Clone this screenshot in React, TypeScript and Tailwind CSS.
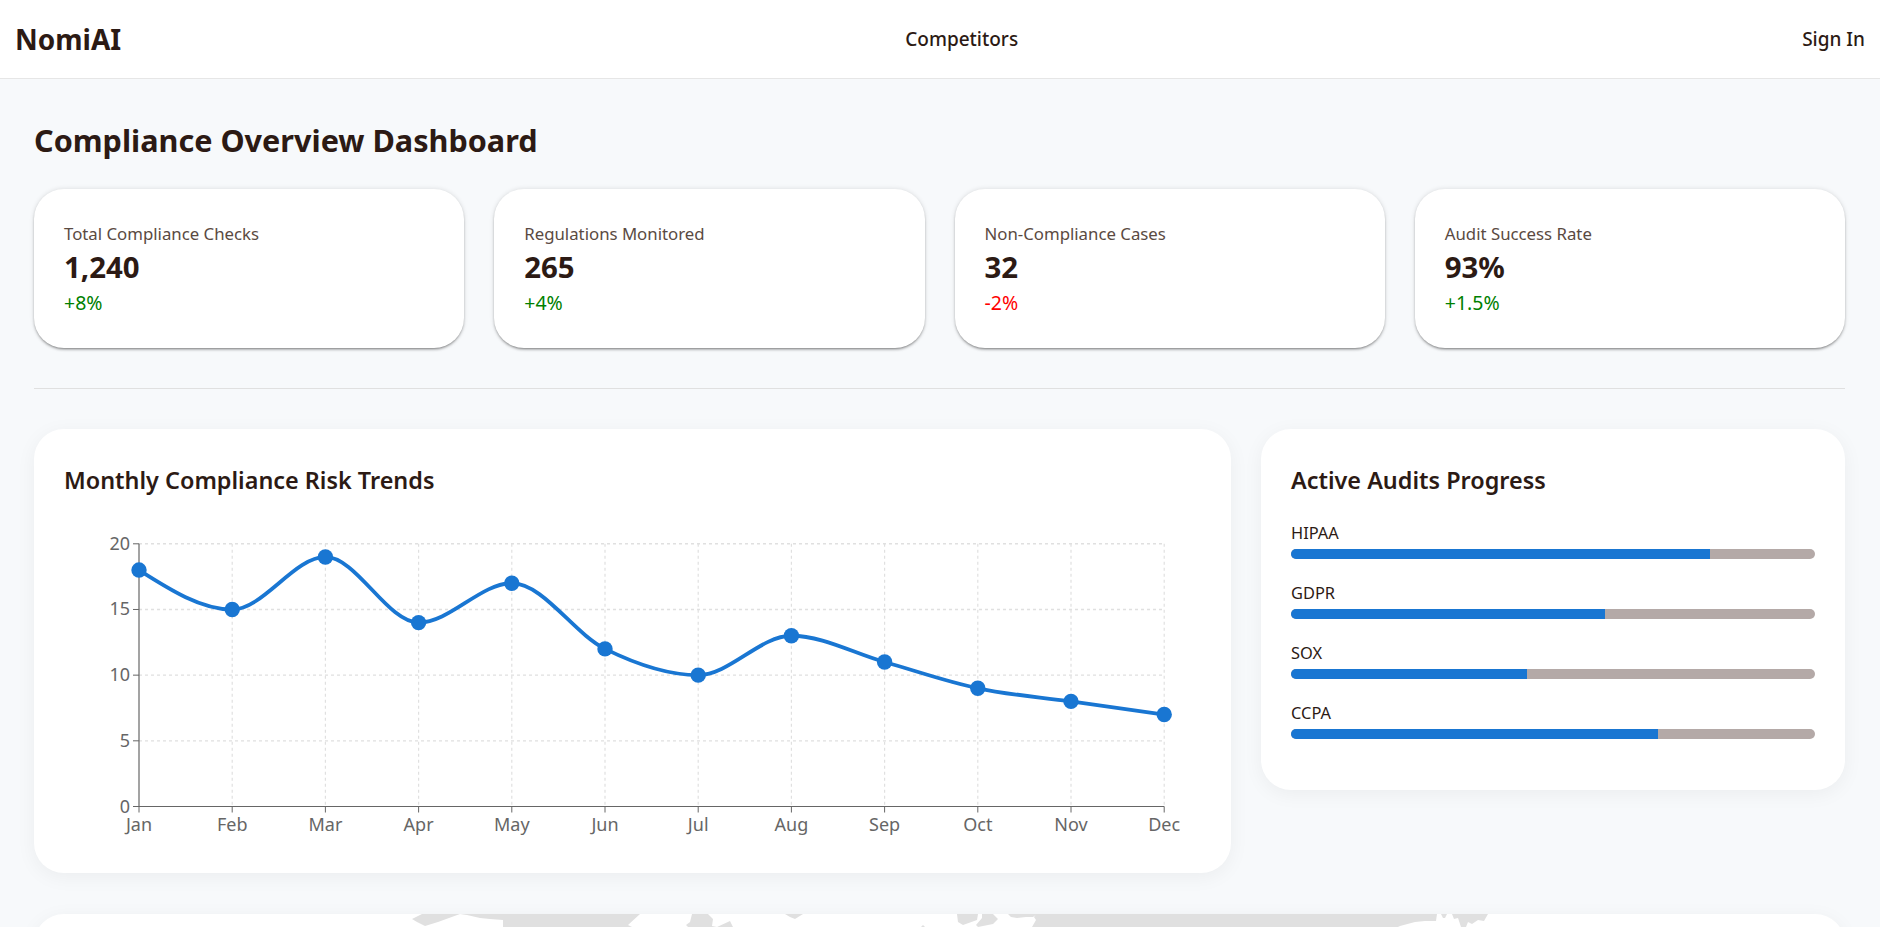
const font = { fontFamily: '"Noto Sans", sans-serif' };
const months = ["Jan","Feb","Mar","Apr","May","Jun","Jul","Aug","Sep","Oct","Nov","Dec"];
const vals = [18,15,19,14,17,12,10,13,11,9,8,7];
const X0 = 74, DX = 93.2, Y0 = 303.5, YH = 262.7;
const px = (i:number) => X0 + i*DX;
const py = (v:number) => Y0 - (v/20)*YH;
function monotone(){
  const n=vals.length, xs=vals.map((_,i)=>px(i)), ys=vals.map(py);
  const sl:number[]=[]; for(let i=0;i<n-1;i++) sl.push((ys[i+1]-ys[i])/(xs[i+1]-xs[i]));
  const t:number[]=new Array(n).fill(0);
  for(let i=1;i<n-1;i++){
    const s0=sl[i-1],s1=sl[i];
    const p=(s0+s1)/2;
    t[i]=(Math.sign(s0)+Math.sign(s1))*Math.min(Math.abs(s0),Math.abs(s1),0.5*Math.abs(p))||0;
  }
  t[0]=(3*sl[0]-t[1])/2; t[n-1]=(3*sl[n-2]-t[n-2])/2;
  let d=`M${xs[0]},${ys[0]}`;
  for(let i=0;i<n-1;i++){const h=DX/3; d+=`C${xs[i]+h},${ys[i]+h*t[i]} ${xs[i+1]-h},${ys[i+1]-h*t[i+1]} ${xs[i+1]},${ys[i+1]}`;}
  return d;
}
function Chart(){
  return (
    <svg width="1140" height="345" className="block mt-[7px]">
      {[5,10,15,20].map(v=><line key={v} x1={X0} x2={X0+11*DX} y1={py(v)} y2={py(v)} stroke="#e0e0e0" strokeWidth="1.4" strokeDasharray="3 3"/>)}
      {months.map((m,i)=>i>0&&<line key={m} x1={px(i)} x2={px(i)} y1={py(20)} y2={Y0} stroke="#e0e0e0" strokeWidth="1.2" strokeDasharray="3 3"/>)}
      <line x1={X0} x2={X0} y1={py(20)} y2={Y0} stroke="#666" strokeWidth="1.2"/>
      <line x1={X0} x2={X0+11*DX} y1={Y0} y2={Y0} stroke="#666" strokeWidth="1.2"/>
      {[0,5,10,15,20].map(v=><g key={v}>
        <line x1={X0-6} x2={X0} y1={py(v)} y2={py(v)} stroke="#666"/>
        <text x={X0-9} y={py(v)+6} textAnchor="end" fontSize="18" fill="#666" style={font}>{v}</text></g>)}
      {months.map((m,i)=><g key={m}>
        <line x1={px(i)} x2={px(i)} y1={Y0} y2={Y0+6} stroke="#666"/>
        <text x={px(i)} y={Y0+24} textAnchor="middle" fontSize="18" fill="#666" style={font}>{m}</text></g>)}
      <path d={monotone()} fill="none" stroke="#1976d2" strokeWidth="3.8"/>
      {vals.map((v,i)=><circle key={i} cx={px(i)} cy={py(v)} r="7.7" fill="#1976d2"/>)}
    </svg>
  );
}
const stats = [
  ["Total Compliance Checks","1,240","+8%","text-[#008000]"],
  ["Regulations Monitored","265","+4%","text-[#008000]"],
  ["Non-Compliance Cases","32","-2%","text-[#ff0000]"],
  ["Audit Success Rate","93%","+1.5%","text-[#008000]"],
];
const audits:[string,number][] = [["HIPAA",80],["GDPR",60],["SOX",45],["CCPA",70]];
const mapShapes = [
  "412,919 422,914 460,914 438,922 425,926 417,922",
  "460,914 640,914 628,925 632,927 503,927 503,920 490,919 480,918 467,915",
  "692,914 708,914 713,919 712,926 717,927 730,921 733,927 688,927 686,925 690,922",
  "785,914 803,914 795,919 790,917",
  "921,927 925,927 923,925",
  "957,914 978,914 977,920 963,925 958,922",
  "982,914 993,914 998,919 993,924 978,927 976,925 982,918",
  "1008,914 1037,914 1033,917 1026,917 1017,918 1011,917",
  "1036,914 1437,914 1436,921 1425,921 1415,922 1400,926 1398,927 1032,927 1036,920 1034,917",
  "1441,914 1447,914 1445,918 1443,918",
  "1452,914 1488,914 1484,921 1478,920 1472,924 1468,922 1466,927 1461,927 1458,918 1454,919",
];
function MapStrip(){
  return (
    <svg width="1811" height="13" viewBox="34 914 1811 13" className="block">
      {mapShapes.map((p,i)=><polygon key={i} points={p} fill="#e0e0e0"/>)}
    </svg>
  );
}
export default function App(){
  return (
    <div className="h-[927px] overflow-hidden bg-[#f7f9fb] text-[#2c1a14]" style={font}>
      <header className="h-[79px] bg-white border-b border-[#e6e6e6] flex items-center justify-between px-[15px]">
        <div className="text-[28px] font-bold">NomiAI</div>
        <div className="text-[19px] font-medium">Competitors</div>
        <div className="text-[19px] font-medium">Sign In</div>
      </header>
      <main className="pl-[34px] pr-[35px]">
        <h1 className="text-[30.6px] font-bold leading-[40px] pt-[41px]">Compliance Overview Dashboard</h1>
        <div className="grid grid-cols-4 gap-[30px] mt-[29px]">
          {stats.map(s=>(
            <div key={s[0]} className="h-[159px] rounded-[30px] bg-white shadow-[0_2px_3px_-1px_rgba(0,0,0,0.5),0_0_5px_rgba(0,0,0,0.12)] pl-[30px] pr-[31px] pt-[33px]">
              <div className="text-[16.8px] leading-[24px] text-[#5a4a42]">{s[0]}</div>
              <div className="text-[29.4px] leading-[40px] font-bold mt-[1px]">{s[1]}</div>
              <div className={`text-[19.5px] leading-[24px] mt-[4px] ${s[3]}`}>{s[2]}</div>
            </div>
          ))}
        </div>
        <div className="h-px bg-[#e0e0e0] mt-[40px]"/>
        <div className="flex items-start gap-[30px] mt-[40px]">
          <section className="w-[1197px] h-[444px] rounded-[30px] bg-white shadow-[0_4px_20px_rgba(0,0,0,0.05)] pl-[31px] pr-[31px] pt-[35px]">
            <h2 className="text-[23.4px] font-semibold leading-[32px] -ml-px">Monthly Compliance Risk Trends</h2>
            <Chart/>
          </section>
          <section className="flex-1 h-[361px] rounded-[30px] bg-white shadow-[0_4px_20px_rgba(0,0,0,0.05)] px-[30px] pt-[35px]">
            <h2 className="text-[23.4px] font-semibold leading-[32px] mb-[26px]">Active Audits Progress</h2>
            {audits.map(([n,p])=>(
              <div key={n} className="mb-[23px]">
                <div className="text-[16.4px] leading-[22px] mb-[5px]">{n}</div>
                <div className="h-[10px] rounded-[5px] bg-[#b4a9a7] overflow-hidden"><div className="h-full bg-[#1976d2]" style={{width:`${p}%`}}/></div>
              </div>
            ))}
          </section>
        </div>
        <section className="h-[200px] mt-[41px] rounded-[30px] bg-white shadow-[0_4px_20px_rgba(0,0,0,0.05)] overflow-hidden"><MapStrip/></section>
      </main>
    </div>
  );
}
